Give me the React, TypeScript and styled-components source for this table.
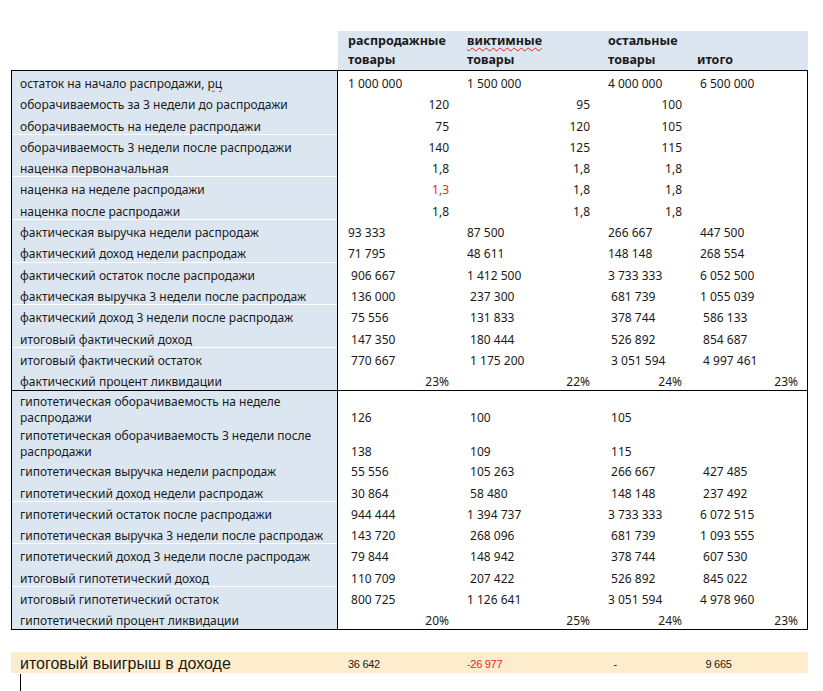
import React from 'react'
import styled, { createGlobalStyle } from 'styled-components'

const GlobalStyle = createGlobalStyle`
  body {
    margin: 0;
    background: #ffffff;
    font-family: 'Noto Sans', 'Open Sans', sans-serif;
    color: #1a1a1a;
  }
`

const COLS = '326px 119px 141px 92px 117px'
const BLUE = '#dce6f1'
const RED = '#e3262b'

type Align = 'left' | 'right'

interface Cell {
  text: string
  red?: boolean
}

interface RowData {
  label: React.ReactNode
  align: Align
  values: Cell[]
  sep?: boolean
  tall?: boolean
}

const Page = styled.div`
  padding: 31px 0 0 11px;
  width: 797px;
`

const HeaderBand = styled.div`
  display: grid;
  grid-template-columns: 327px 119px 141px 92px 118px;
  height: 39px;
`

const HeadCell = styled.div<{ $blank?: boolean; $inset?: number }>`
  background: ${(p) => (p.$blank ? 'transparent' : BLUE)};
  padding: 0 0 0 ${(p) => p.$inset ?? 10}px;
  font-weight: 700;
  font-size: 12.5px;
  line-height: 19px;
  white-space: pre;
`

const Misspelled = styled.span`
  text-decoration: underline wavy #e02020;
  text-decoration-thickness: 1px;
  text-underline-offset: 2px;
`

const Sheet = styled.div`
  box-sizing: border-box;
  width: 797px;
  border: 1px solid #000;
`

const Group = styled.div`
  & + & {
    border-top: 1px solid #000;
  }
`

const Row = styled.div<{ $h: number }>`
  display: grid;
  grid-template-columns: ${COLS};
  height: ${(p) => p.$h}px;
`

const Label = styled.div<{ $sep?: boolean; $tall?: boolean }>`
  background: ${BLUE};
  border-right: 1px solid #000;
  box-shadow: ${(p) => (p.$sep ? 'inset 0 -1px 0 #ffffff' : 'none')};
  padding: ${(p) => (p.$tall ? '3px' : '5px')} 0 0 8px;
  font-size: 12px;
  line-height: 16px;
  white-space: pre;
`

const Value = styled.div<{ $align: Align; $red?: boolean; $tall?: boolean; $last?: boolean }>`
  text-align: ${(p) => p.$align};
  color: ${(p) => (p.$red ? RED : '#1a1a1a')};
  padding: ${(p) => (p.$tall ? '19px' : '5px')} ${(p) => (p.$last ? 9 : 8)}px 0 10px;
  font-size: 12px;
  line-height: 16px;
  white-space: pre;
`

const Summary = styled.div`
  display: grid;
  grid-template-columns: 327px 119px 141px 92px 118px;
  margin-top: 22px;
  height: 21px;
  background: #fdedcd;
  font-family: 'Liberation Sans', Arial, sans-serif;
`

const SummaryLabel = styled.div`
  padding-left: 9px;
  font-size: 16px;
  line-height: 23px;
  white-space: pre;
`

const SummaryValue = styled.div<{ $red?: boolean }>`
  padding: 4px 0 0 10px;
  font-size: 11px;
  letter-spacing: -0.3px;
  line-height: 16px;
  color: ${(p) => (p.$red ? RED : '#1a1a1a')};
  white-space: pre;
`

const Caret = styled.div`
  margin: 1px 0 0 9px;
  width: 1px;
  height: 17px;
  background: #000;
`

const L = (a: string, b: string, c: string, d: string): Cell[] => [
  { text: a },
  { text: b },
  { text: c },
  { text: d },
]

const factRows: RowData[] = [
  {
    label: (
      <>
        остаток на начало распродажи, <Misspelled>рц</Misspelled>
      </>
    ),
    align: 'left',
    values: L('1 000 000', '1 500 000', '4 000 000', '6 500 000'),
  },
  { label: 'оборачиваемость за 3 недели до распродажи', align: 'right', values: L('120', '95', '100', '') },
  { label: 'оборачиваемость на неделе распродажи', align: 'right', values: L('75', '120', '105', ''), sep: true },
  { label: 'оборачиваемость 3 недели после распродажи', align: 'right', values: L('140', '125', '115', '') },
  { label: 'наценка первоначальная', align: 'right', values: L('1,8', '1,8', '1,8', ''), sep: true },
  {
    label: 'наценка на неделе распродажи',
    align: 'right',
    values: [{ text: '1,3', red: true }, { text: '1,8' }, { text: '1,8' }, { text: '' }],
  },
  { label: 'наценка после распродажи', align: 'right', values: L('1,8', '1,8', '1,8', ''), sep: true },
  { label: 'фактическая выручка недели распродаж', align: 'left', values: L('93 333', '87 500', '266 667', '447 500') },
  { label: 'фактический доход недели распродаж', align: 'left', values: L('71 795', '48 611', '148 148', '268 554'), sep: true },
  { label: 'фактический остаток после распродажи', align: 'left', values: L(' 906 667', '1 412 500', '3 733 333', '6 052 500') },
  { label: 'фактическая выручка 3 недели после распродаж', align: 'left', values: L(' 136 000', ' 237 300', ' 681 739', '1 055 039'), sep: true },
  { label: 'фактический доход 3 недели после распродаж', align: 'left', values: L(' 75 556', ' 131 833', ' 378 744', ' 586 133') },
  { label: 'итоговый фактический доход', align: 'left', values: L(' 147 350', ' 180 444', ' 526 892', ' 854 687'), sep: true },
  { label: 'итоговый фактический остаток', align: 'left', values: L(' 770 667', ' 1 175 200', ' 3 051 594', ' 4 997 461') },
  { label: 'фактический процент ликвидации', align: 'right', values: L('23%', '22%', '24%', '23%') },
]

const hypoRows: RowData[] = [
  {
    label: 'гипотетическая оборачиваемость на неделе\nраспродажи',
    align: 'left',
    values: L(' 126', ' 100', ' 105', ''),
    tall: true,
  },
  {
    label: 'гипотетическая оборачиваемость 3 недели после\nраспродажи',
    align: 'left',
    values: L(' 138', ' 109', ' 115', ''),
    tall: true,
  },
  { label: 'гипотетическая выручка недели распродаж', align: 'left', values: L(' 55 556', ' 105 263', ' 266 667', ' 427 485') },
  { label: 'гипотетический доход недели распродаж', align: 'left', values: L(' 30 864', ' 58 480', ' 148 148', ' 237 492'), sep: true },
  { label: 'гипотетический остаток после распродажи', align: 'left', values: L(' 944 444', '1 394 737', '3 733 333', '6 072 515') },
  { label: 'гипотетическая выручка 3 недели после распродаж', align: 'left', values: L(' 143 720', ' 268 096', ' 681 739', '1 093 555'), sep: true },
  { label: 'гипотетический доход 3 недели после распродаж', align: 'left', values: L(' 79 844', ' 148 942', ' 378 744', ' 607 530') },
  { label: 'итоговый гипотетический доход', align: 'left', values: L(' 110 709', ' 207 422', ' 526 892', ' 845 022'), sep: true },
  { label: 'итоговый гипотетический остаток', align: 'left', values: L(' 800 725', '1 126 641', '3 051 594', '4 978 960') },
  { label: 'гипотетический процент ликвидации', align: 'right', values: L('20%', '25%', '24%', '23%') },
]

const TableRow: React.FC<{ row: RowData; h: number }> = ({ row, h }) => (
  <Row $h={h}>
    <Label $sep={row.sep} $tall={row.tall}>
      {row.label}
    </Label>
    {row.values.map((v, i) => (
      <Value key={i} $align={row.align} $red={v.red} $tall={row.tall} $last={i === 3}>
        {v.text}
      </Value>
    ))}
  </Row>
)

const App: React.FC = () => {
  return (
    <Page>
      <GlobalStyle />
      <HeaderBand>
        <HeadCell $blank />
        <HeadCell>{'распродажные\nтовары'}</HeadCell>
        <HeadCell>
          <Misspelled>виктимные</Misspelled>
          {'\nтовары'}
        </HeadCell>
        <HeadCell>{'остальные\nтовары'}</HeadCell>
        <HeadCell $inset={7}>{'\nитого'}</HeadCell>
      </HeaderBand>

      <Sheet>
        <Group>
          {factRows.map((r, i) => (
            <TableRow key={i} row={r} h={21.3} />
          ))}
        </Group>
        <Group>
          {hypoRows.map((r, i) => (
            <TableRow key={i} row={r} h={r.tall ? 34 : 21.25} />
          ))}
        </Group>
      </Sheet>

      <Summary>
        <SummaryLabel>итоговый выигрыш в доходе</SummaryLabel>
        <SummaryValue>36 642</SummaryValue>
        <SummaryValue $red>-26 977</SummaryValue>
        <SummaryValue>{'  -'}</SummaryValue>
        <SummaryValue>{'  9 665'}</SummaryValue>
      </Summary>
      <Caret />
    </Page>
  )
}

export default App
